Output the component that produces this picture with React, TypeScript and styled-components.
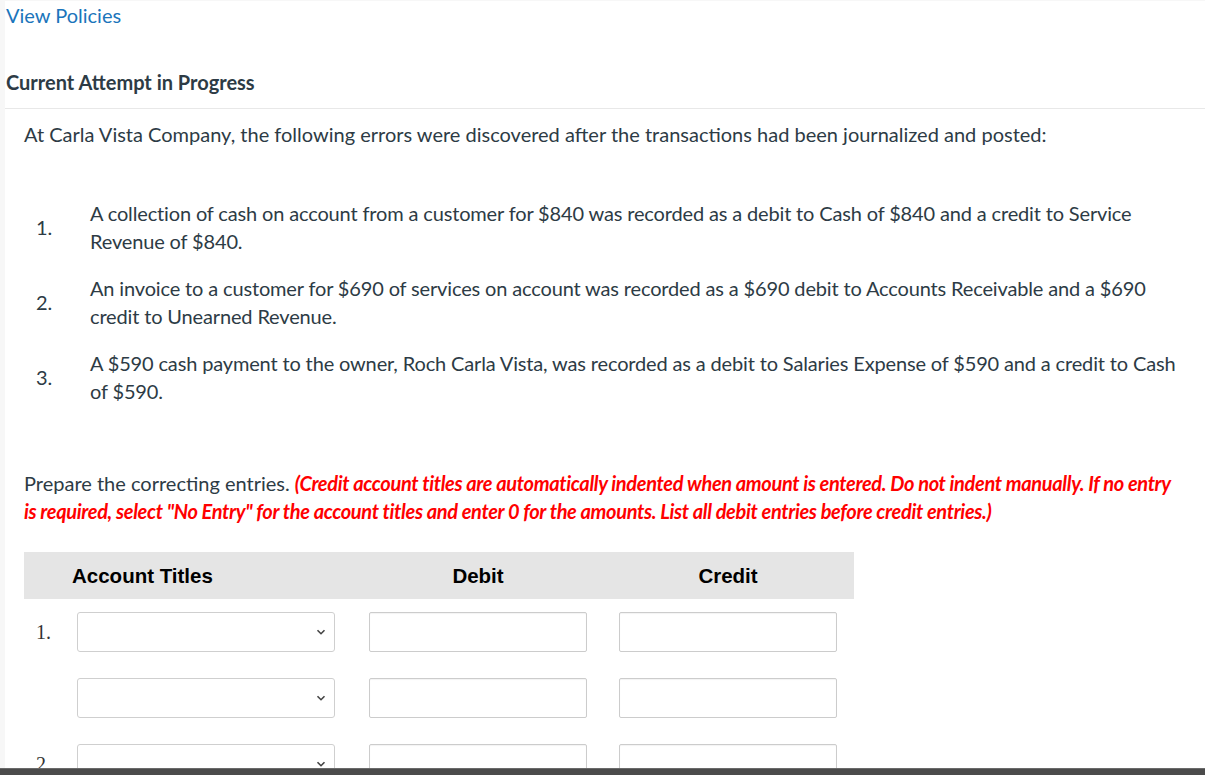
import React from 'react';
import styled, { createGlobalStyle } from 'styled-components';

const GlobalStyle = createGlobalStyle`
  html, body {
    margin: 0;
    padding: 0;
    background: #f7f7f7;
    overflow: hidden;
  }
  body {
    font-family: Lato, "Open Sans", sans-serif;
    color: #2d3b45;
  }
`;

interface Entry {
  num: string;
  text: string;
}

const errors: Entry[] = [
  {
    num: '1.',
    text: 'A collection of cash on account from a customer for $840 was recorded as a debit to Cash of $840 and a credit to Service Revenue of $840.',
  },
  {
    num: '2.',
    text: 'An invoice to a customer for $690 of services on account was recorded as a $690 debit to Accounts Receivable and a $690 credit to Unearned Revenue.',
  },
  {
    num: '3.',
    text: 'A $590 cash payment to the owner, Roch Carla Vista, was recorded as a debit to Salaries Expense of $590 and a credit to Cash of $590.',
  },
];

const rows = [{ label: '1.' }, { label: '' }, { label: '2.' }];

const Chevron = () => (
  <svg width="10" height="10" viewBox="0 0 10 10">
    <path d="M1.5 3.2 L5 6.7 L8.5 3.2" fill="none" stroke="#444" strokeWidth="1.6" />
  </svg>
);

const App: React.FC = () => {
  return (
    <>
      <GlobalStyle />
      <Page>
        <PolicyLink href="#">View Policies</PolicyLink>
        <AttemptHeading>Current Attempt in Progress</AttemptHeading>
        <Intro>
          At Carla Vista Company, the following errors were discovered after the transactions had been
          journalized and posted:
        </Intro>
        <ErrorList>
          {errors.map((e) => (
            <ErrorItem key={e.num}>
              <ItemNum>{e.num}</ItemNum>
              <ItemText>{e.text}</ItemText>
            </ErrorItem>
          ))}
        </ErrorList>
        <Instructions>
          Prepare the correcting entries.{' '}
          <Warning>
            (Credit account titles are automatically indented when amount is entered. Do not indent
            manually. If no entry is required, select "No Entry" for the account titles and enter 0 for
            the amounts. List all debit entries before credit entries.)
          </Warning>
        </Instructions>
        <JournalTable>
          <HeaderRow>
            <AccountHead>Account Titles</AccountHead>
            <AmountHead>Debit</AmountHead>
            <AmountHead>Credit</AmountHead>
          </HeaderRow>
          {rows.map((r, i) => (
            <EntryRow key={i}>
              <RowNum>{r.label}</RowNum>
              <SelectWrap>
                <AccountSelect defaultValue="">
                  <option value=""></option>
                </AccountSelect>
                <ChevronBox>
                  <Chevron />
                </ChevronBox>
              </SelectWrap>
              <AmountInput type="text" />
              <AmountInput type="text" />
            </EntryRow>
          ))}
        </JournalTable>
      </Page>
      <BottomBar />
    </>
  );
};

const Page = styled.main`
  margin: 1px 0 0 5px;
  background: #fff;
  min-height: 774px;
  padding: 0 20px 0 0;
  box-sizing: border-box;
  font-size: 20px;
  line-height: 28px;
`;

const PolicyLink = styled.a`
  display: block;
  width: max-content;
  padding-left: 1px;
  color: #1b75bb;
  text-decoration: none;
`;

const AttemptHeading = styled.h2`
  margin: 39px -20px 0 0;
  padding: 0 0 12px 1px;
  font-size: 20px;
  font-weight: 700;
  line-height: 28px;
  color: #2d3b45;
  border-bottom: 1px solid #e8e8e8;
`;

const Intro = styled.p`
  margin: 11px 0 0 19px;
`;

const ErrorList = styled.div`
  margin: 51px 0 0 19px;
  display: flex;
  flex-direction: column;
  gap: 19px;
`;

const ErrorItem = styled.div`
  display: flex;
  align-items: center;
`;

const ItemNum = styled.span`
  width: 66px;
  flex-shrink: 0;
  padding-left: 12px;
  box-sizing: border-box;
`;

const ItemText = styled.span`
  flex: 1;
  letter-spacing: -0.15px;
`;

const Instructions = styled.p`
  margin: 64px 0 0 19px;
`;

const Warning = styled.em`
  color: #ff0000;
  font-weight: 700;
  letter-spacing: -0.35px;
`;

const JournalTable = styled.div`
  margin: 27px 0 0 19px;
  width: 830px;
`;

const grid = `
  display: grid;
  grid-template-columns: 53px 292px 250px 235px;
  align-items: center;
`;

const HeaderRow = styled.div`
  ${grid}
  height: 47px;
  background: #e5e5e5;
  font-family: "Liberation Sans", Arial, sans-serif;
  font-weight: 700;
  font-size: 20.5px;
  color: #000;
`;

const AccountHead = styled.div`
  grid-column: 1 / span 2;
  padding-left: 48px;
`;

const AmountHead = styled.div`
  width: 218px;
  text-align: center;
`;

const EntryRow = styled.div`
  ${grid}
  margin-top: 13px;
  & + & {
    margin-top: 26px;
  }
`;

const RowNum = styled.span`
  padding-left: 12px;
  font-family: "Liberation Serif", "Times New Roman", serif;
  font-size: 20px;
  color: #333;
`;

const SelectWrap = styled.div`
  position: relative;
  width: 258px;
  height: 40px;
`;

const AccountSelect = styled.select`
  appearance: none;
  width: 100%;
  height: 100%;
  border: 1px solid #cfcfcf;
  border-radius: 3px;
  background: #fff;
  box-sizing: border-box;
`;

const ChevronBox = styled.span`
  position: absolute;
  right: 9px;
  top: 15px;
  pointer-events: none;
  display: flex;
`;

const AmountInput = styled.input`
  width: 218px;
  height: 40px;
  box-sizing: border-box;
  border: 1px solid #cccccc;
  border-radius: 2px;
  box-shadow: inset 0 1px 1px rgba(0, 0, 0, 0.05);
  background: #fff;
`;

const BottomBar = styled.div`
  position: fixed;
  left: 0;
  right: 0;
  bottom: 0;
  height: 6px;
  background: #4b4b4b;
  border-top: 1px solid #6a6a6a;
`;

export default App;
